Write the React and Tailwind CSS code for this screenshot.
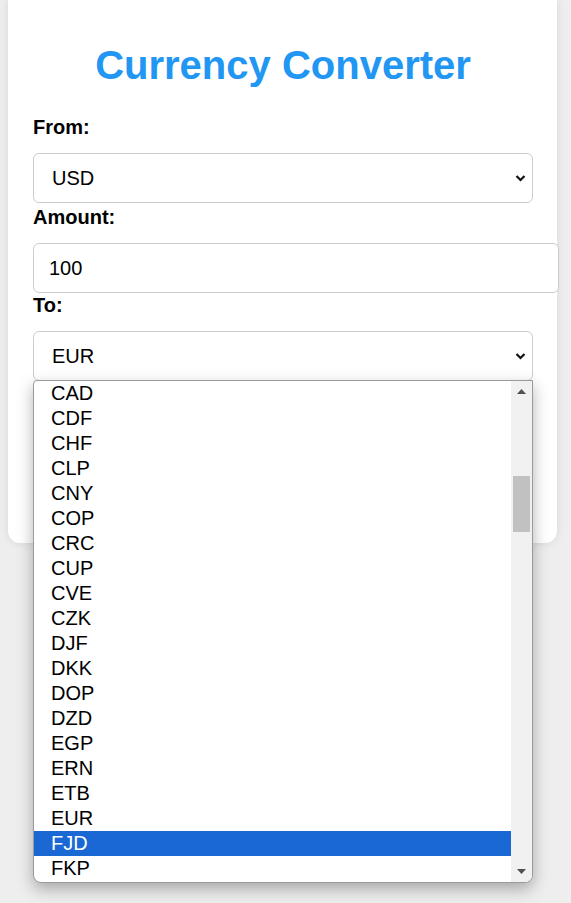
import { useState } from 'react'

const codes = [
  'CAD', 'CDF', 'CHF', 'CLP', 'CNY', 'COP', 'CRC', 'CUP', 'CVE', 'CZK',
  'DJF', 'DKK', 'DOP', 'DZD', 'EGP', 'ERN', 'ETB', 'EUR', 'FJD', 'FKP',
]

const Chevron = () => (
  <svg width="11" height="8" viewBox="0 0 11 8" className="absolute right-[6px] top-1/2 -translate-y-1/2">
    <polyline points="1.5,2 5.5,6 9.5,2" fill="none" stroke="#111" strokeWidth="2.2" />
  </svg>
)

const FakeSelect = ({ value }) => (
  <div className="relative h-[50px] w-full rounded-[6px] border border-[#cccccc] bg-white pl-[18px] flex items-center text-[20px] text-black">
    {value}
    <Chevron />
  </div>
)

const App = () => {
  const [amount] = useState('100')
  const highlighted = 'FJD'

  return (
    <div className="min-h-[903px] bg-[#eeeeee] px-[8px] font-['Liberation_Sans',Arial,sans-serif]">
      <div className="relative w-[549px] rounded-b-[12px] bg-white pl-[25px] pr-[24px] pt-[42px] pb-[28px] shadow-[0_0_10px_rgba(0,0,0,0.1)]">
        <h1 className="text-center text-[40px] leading-[46px] font-bold text-[#2196f3] mb-[27px]">
          Currency Converter
        </h1>

        <label className="block text-[20px] leading-[25px] font-bold text-black mb-[13px]">From:</label>
        <FakeSelect value="USD" />

        <label className="block mt-[2px] text-[20px] leading-[25px] font-bold text-black mb-[13px]">Amount:</label>
        <input
          type="text"
          readOnly
          value={amount}
          className="block h-[50px] w-[526px] rounded-[6px] border border-[#cccccc] bg-white px-[15px] text-[20px] text-black outline-none"
        />

        <label className="block text-[20px] leading-[25px] font-bold text-black mb-[13px]">To:</label>
        <div className="relative">
          <FakeSelect value="EUR" />

          {/* open dropdown list */}
          <div className="absolute left-0 top-[49px] z-10 flex h-[503px] w-full overflow-hidden rounded-b-[8px] rounded-tl-[4px] border border-[#9a9a9a] bg-white shadow-[0_6px_16px_rgba(0,0,0,0.3)]">
            <div className="flex-1">
              {codes.map((c) => (
                <div
                  key={c}
                  className={
                    c === highlighted
                      ? 'h-[25px] pl-[17px] pb-[2px] flex items-center text-[20px] bg-[#1a68d4] text-white'
                      : 'h-[25px] pl-[17px] pb-[2px] flex items-center text-[20px] text-black'
                  }
                >
                  {c}
                </div>
              ))}
            </div>
            <div className="relative w-[21px] bg-[#f1f1f1]">
              <svg width="9" height="5" viewBox="0 0 9 5" className="absolute left-[6px] top-[8px]">
                <polygon points="0,5 4.5,0 9,5" fill="#505050" />
              </svg>
              <div className="absolute left-[2px] top-[95px] h-[56px] w-[17px] bg-[#c1c1c1]" />
              <svg width="9" height="5" viewBox="0 0 9 5" className="absolute left-[6px] bottom-[8px]">
                <polygon points="0,0 4.5,5 9,0" fill="#505050" />
              </svg>
            </div>
          </div>
        </div>

        <button className="mt-[14px] block h-[46px] w-full rounded-[6px] bg-[#2196f3] text-[20px] font-bold text-white">
          Convert
        </button>
        <div className="mt-[32px] h-[42px] rounded-[6px] border border-[#dddddd] bg-[#f9f9f9]" />
      </div>
    </div>
  )
}

export default App
